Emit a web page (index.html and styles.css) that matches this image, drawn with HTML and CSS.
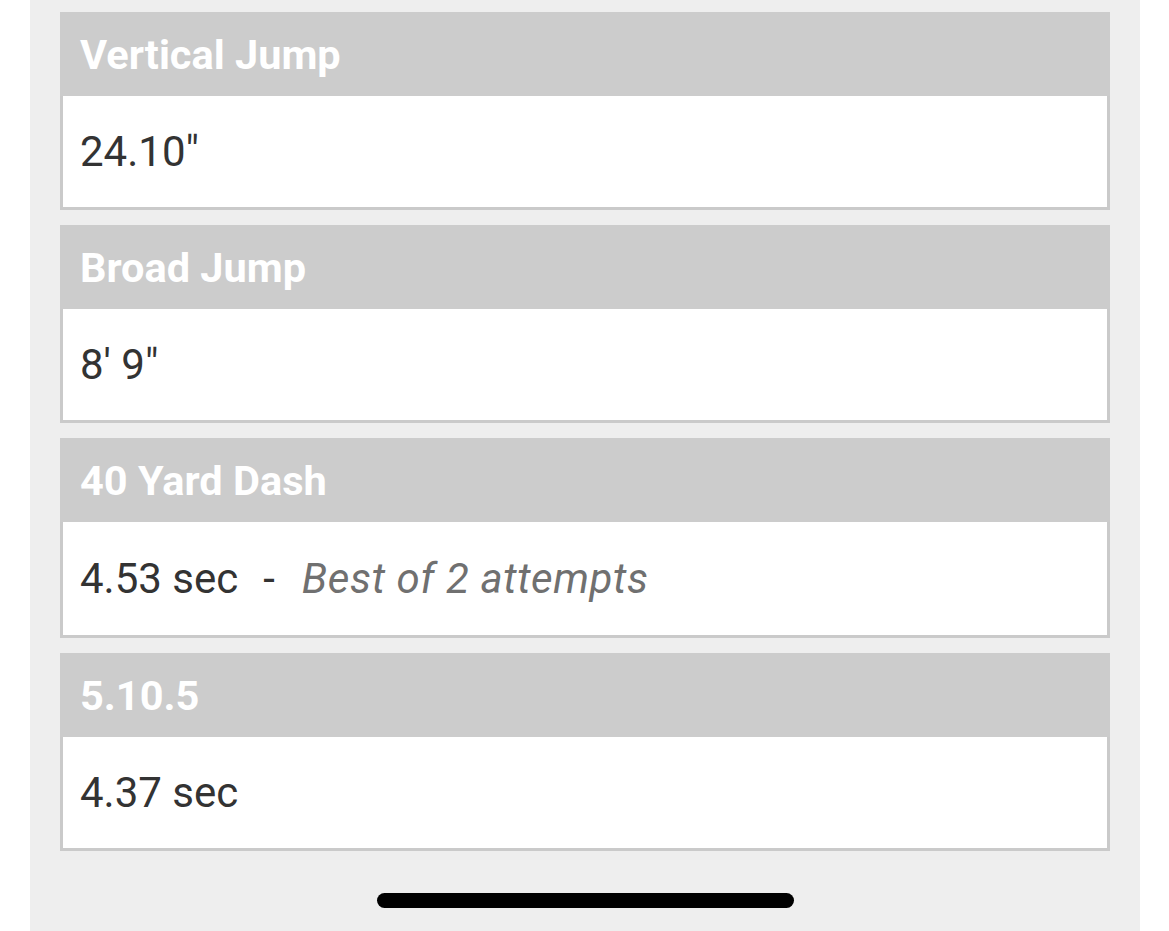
FILE: index.html
```html
<!DOCTYPE html>
<html>
<head>
<meta charset="utf-8">
<link rel="stylesheet" href="styles.css">
</head>
<body>
<div class="screen">
  <div class="list">
    <div class="card">
      <div class="card-head">Vertical Jump</div>
      <div class="card-body">24.10"</div>
    </div>
    <div class="card">
      <div class="card-head">Broad Jump</div>
      <div class="card-body">8' 9"</div>
    </div>
    <div class="card card-tall">
      <div class="card-head">40 Yard Dash</div>
      <div class="card-body">4.53 sec<span class="sep">-</span><span class="note">Best of 2 attempts</span></div>
    </div>
    <div class="card">
      <div class="card-head">5.10.5</div>
      <div class="card-body">4.37 sec</div>
    </div>
  </div>
  <div class="home-bar"></div>
</div>
</body>
</html>
```
FILE: styles.css
```css
html, body {
  margin: 0;
  padding: 0;
  background: #ffffff;
}
body {
  font-family: Roboto, "Liberation Sans", sans-serif;
}
.screen {
  margin: 0 29px 0 30px;
  background: #eeeeee;
  height: 931px;
  box-sizing: border-box;
  padding: 12px 30px 0 30px;
  display: flex;
  flex-direction: column;
}
.list {
  display: flex;
  flex-direction: column;
  gap: 15px;
}
.card {
  display: flex;
  flex-direction: column;
}
.card-head {
  height: 84px;
  background: #cccccc;
  color: #ffffff;
  font-weight: 700;
  font-size: 41.5px;
  display: flex;
  align-items: center;
  padding-left: 20px;
}
.card-body {
  height: 111px;
  background: #ffffff;
  border: 3px solid #cacaca;
  border-top: none;
  color: #333333;
  font-size: 42px;
  display: flex;
  align-items: center;
  padding-left: 17px;
}
.card-tall .card-body {
  height: 113px;
}
.sep {
  margin: 0 27px 0 25px;
}
.note {
  font-style: italic;
  color: #707070;
  letter-spacing: 0.6px;
}
.home-bar {
  align-self: center;
  margin-top: 42px;
  width: 417px;
  height: 15px;
  border-radius: 8px;
  background: #000000;
}
```
